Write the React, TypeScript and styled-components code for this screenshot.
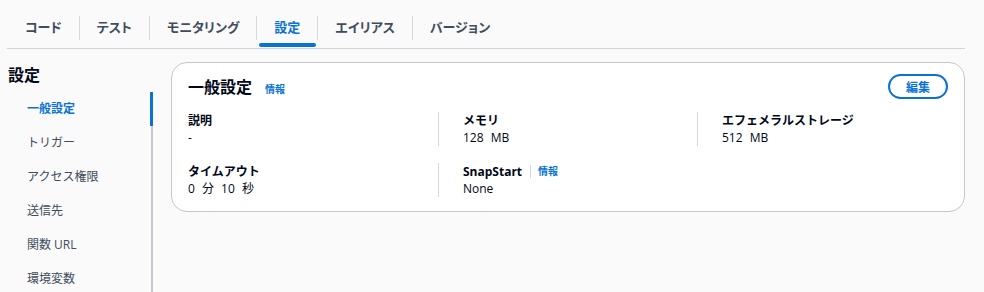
import React from "react";
import styled, { createGlobalStyle } from "styled-components";

const GlobalStyle = createGlobalStyle`
  html, body {
    margin: 0;
    padding: 0;
    background: #fafafa;
    font-family: "Open Sans", "Noto Sans CJK JP", sans-serif;
    color: #000716;
  }
  * { box-sizing: border-box; }
`;

const Page = styled.div`
  width: 984px;
  height: 292px;
  overflow: hidden;
`;

const TabBar = styled.div`
  display: flex;
  align-items: flex-start;
  margin-left: 7px;
  width: 958px;
  height: 49px;
  padding-top: 16px;
  border-bottom: 1px solid #d1d5db;
`;

const Tab = styled.div<{ $active?: boolean; $first?: boolean }>`
  position: relative;
  display: flex;
  align-items: center;
  height: 24px;
  padding: 0 17px 3px 17px;
  border-left: ${(p) => (p.$first ? "none" : "1px solid #d5d8dd")};
  font-size: 13px;
  font-feature-settings: "palt";
  font-weight: 700;
  color: ${(p) => (p.$active ? "#0972d3" : "#414d5c")};
  white-space: nowrap;
  &:first-child {
    padding-left: 18px;
  }
  &::after {
    content: "";
    display: ${(p) => (p.$active ? "block" : "none")};
    position: absolute;
    left: 2px;
    right: 1px;
    bottom: -7px;
    height: 4px;
    border-radius: 2px;
    background: #0972d3;
  }
`;

const Main = styled.div`
  display: flex;
  align-items: flex-start;
  gap: 18px;
  margin-top: 13px;
`;

const Sidebar = styled.nav`
  width: 153px;
  padding-left: 8px;
  flex-shrink: 0;
`;

const SideHeading = styled.div`
  margin-top: 3px;
  font-size: 16px;
  font-weight: 700;
  line-height: 20px;
  color: #000716;
`;

const NavList = styled.div`
  margin-top: 7px;
  display: flex;
  flex-direction: column;
`;

const NavItem = styled.div<{ $active?: boolean }>`
  position: relative;
  height: 34px;
  line-height: 34px;
  padding-left: 19px;
  font-size: 12px;
  font-weight: ${(p) => (p.$active ? 700 : 400)};
  color: ${(p) => (p.$active ? "#0972d3" : "#414d5c")};
  border-right: 2px solid #c6c6cd;
  white-space: nowrap;
  &::after {
    content: "";
    display: ${(p) => (p.$active ? "block" : "none")};
    position: absolute;
    top: 0;
    bottom: 0;
    right: -2px;
    width: 3px;
    background: #0972d3;
  }
`;

const Card = styled.section`
  width: 794px;
  background: #ffffff;
  border: 1px solid #c6c6cd;
  border-radius: 16px;
  padding: 11px 16px 14px 16px;
`;

const CardHeader = styled.div`
  display: flex;
  align-items: center;
  height: 25px;
`;

const CardTitle = styled.h2`
  margin: 0;
  font-size: 16px;
  font-weight: 700;
  line-height: 20px;
  color: #000716;
`;

const InfoLink = styled.span`
  font-size: 10px;
  font-weight: 700;
  color: #0972d3;
`;

const TitleInfo = styled(InfoLink)`
  margin-left: 13px;
  margin-top: 3px;
`;

const EditButton = styled.button`
  margin-left: auto;
  width: 60px;
  height: 25px;
  border: 2px solid #0972d3;
  border-radius: 13px;
  background: #ffffff;
  color: #0972d3;
  font-family: inherit;
  font-size: 12px;
  font-weight: 700;
  padding: 0;
  cursor: pointer;
`;

const Grid = styled.div`
  display: grid;
  grid-template-columns: 250px 259px 1fr;
  row-gap: 17px;
  margin-top: 13px;
`;

const Cell = styled.div<{ $divider?: boolean }>`
  min-height: 34px;
  padding-left: ${(p) => (p.$divider ? "24px" : "0")};
  border-left: ${(p) => (p.$divider ? "1px solid #d5d8dd" : "none")};
`;

const Label = styled.div`
  display: flex;
  align-items: center;
  font-size: 12px;
  font-weight: 700;
  line-height: 17px;
  color: #000716;
`;

const LabelSep = styled.span`
  display: inline-block;
  width: 1px;
  height: 13px;
  background: #d5d8dd;
  margin: 0 7px 0 8px;
`;

const Value = styled.div`
  font-size: 12px;
  line-height: 17px;
  color: #000716;
  word-spacing: 4px;
`;

export default function App() {
  const tabs = ["コード", "テスト", "モニタリング", "設定", "エイリアス", "バージョン"];
  const nav = ["一般設定", "トリガー", "アクセス権限", "送信先", "関数 URL", "環境変数"];
  return (
    <Page>
      <GlobalStyle />
      <TabBar>
        {tabs.map((t, i) => (
          <Tab key={t} $first={i === 0} $active={t === "設定"}>
            {t}
          </Tab>
        ))}
      </TabBar>
      <Main>
        <Sidebar>
          <SideHeading>設定</SideHeading>
          <NavList>
            {nav.map((n, i) => (
              <NavItem key={n} $active={i === 0}>
                {n}
              </NavItem>
            ))}
          </NavList>
        </Sidebar>
        <Card>
          <CardHeader>
            <CardTitle>一般設定</CardTitle>
            <TitleInfo>情報</TitleInfo>
            <EditButton>編集</EditButton>
          </CardHeader>
          <Grid>
            <Cell>
              <Label>説明</Label>
              <Value>-</Value>
            </Cell>
            <Cell $divider>
              <Label>メモリ</Label>
              <Value>128 MB</Value>
            </Cell>
            <Cell $divider>
              <Label>エフェメラルストレージ</Label>
              <Value>512 MB</Value>
            </Cell>
            <Cell>
              <Label>タイムアウト</Label>
              <Value>0 分 10 秒</Value>
            </Cell>
            <Cell $divider>
              <Label>
                SnapStart
                <LabelSep />
                <InfoLink>情報</InfoLink>
              </Label>
              <Value>None</Value>
            </Cell>
          </Grid>
        </Card>
      </Main>
    </Page>
  );
}
